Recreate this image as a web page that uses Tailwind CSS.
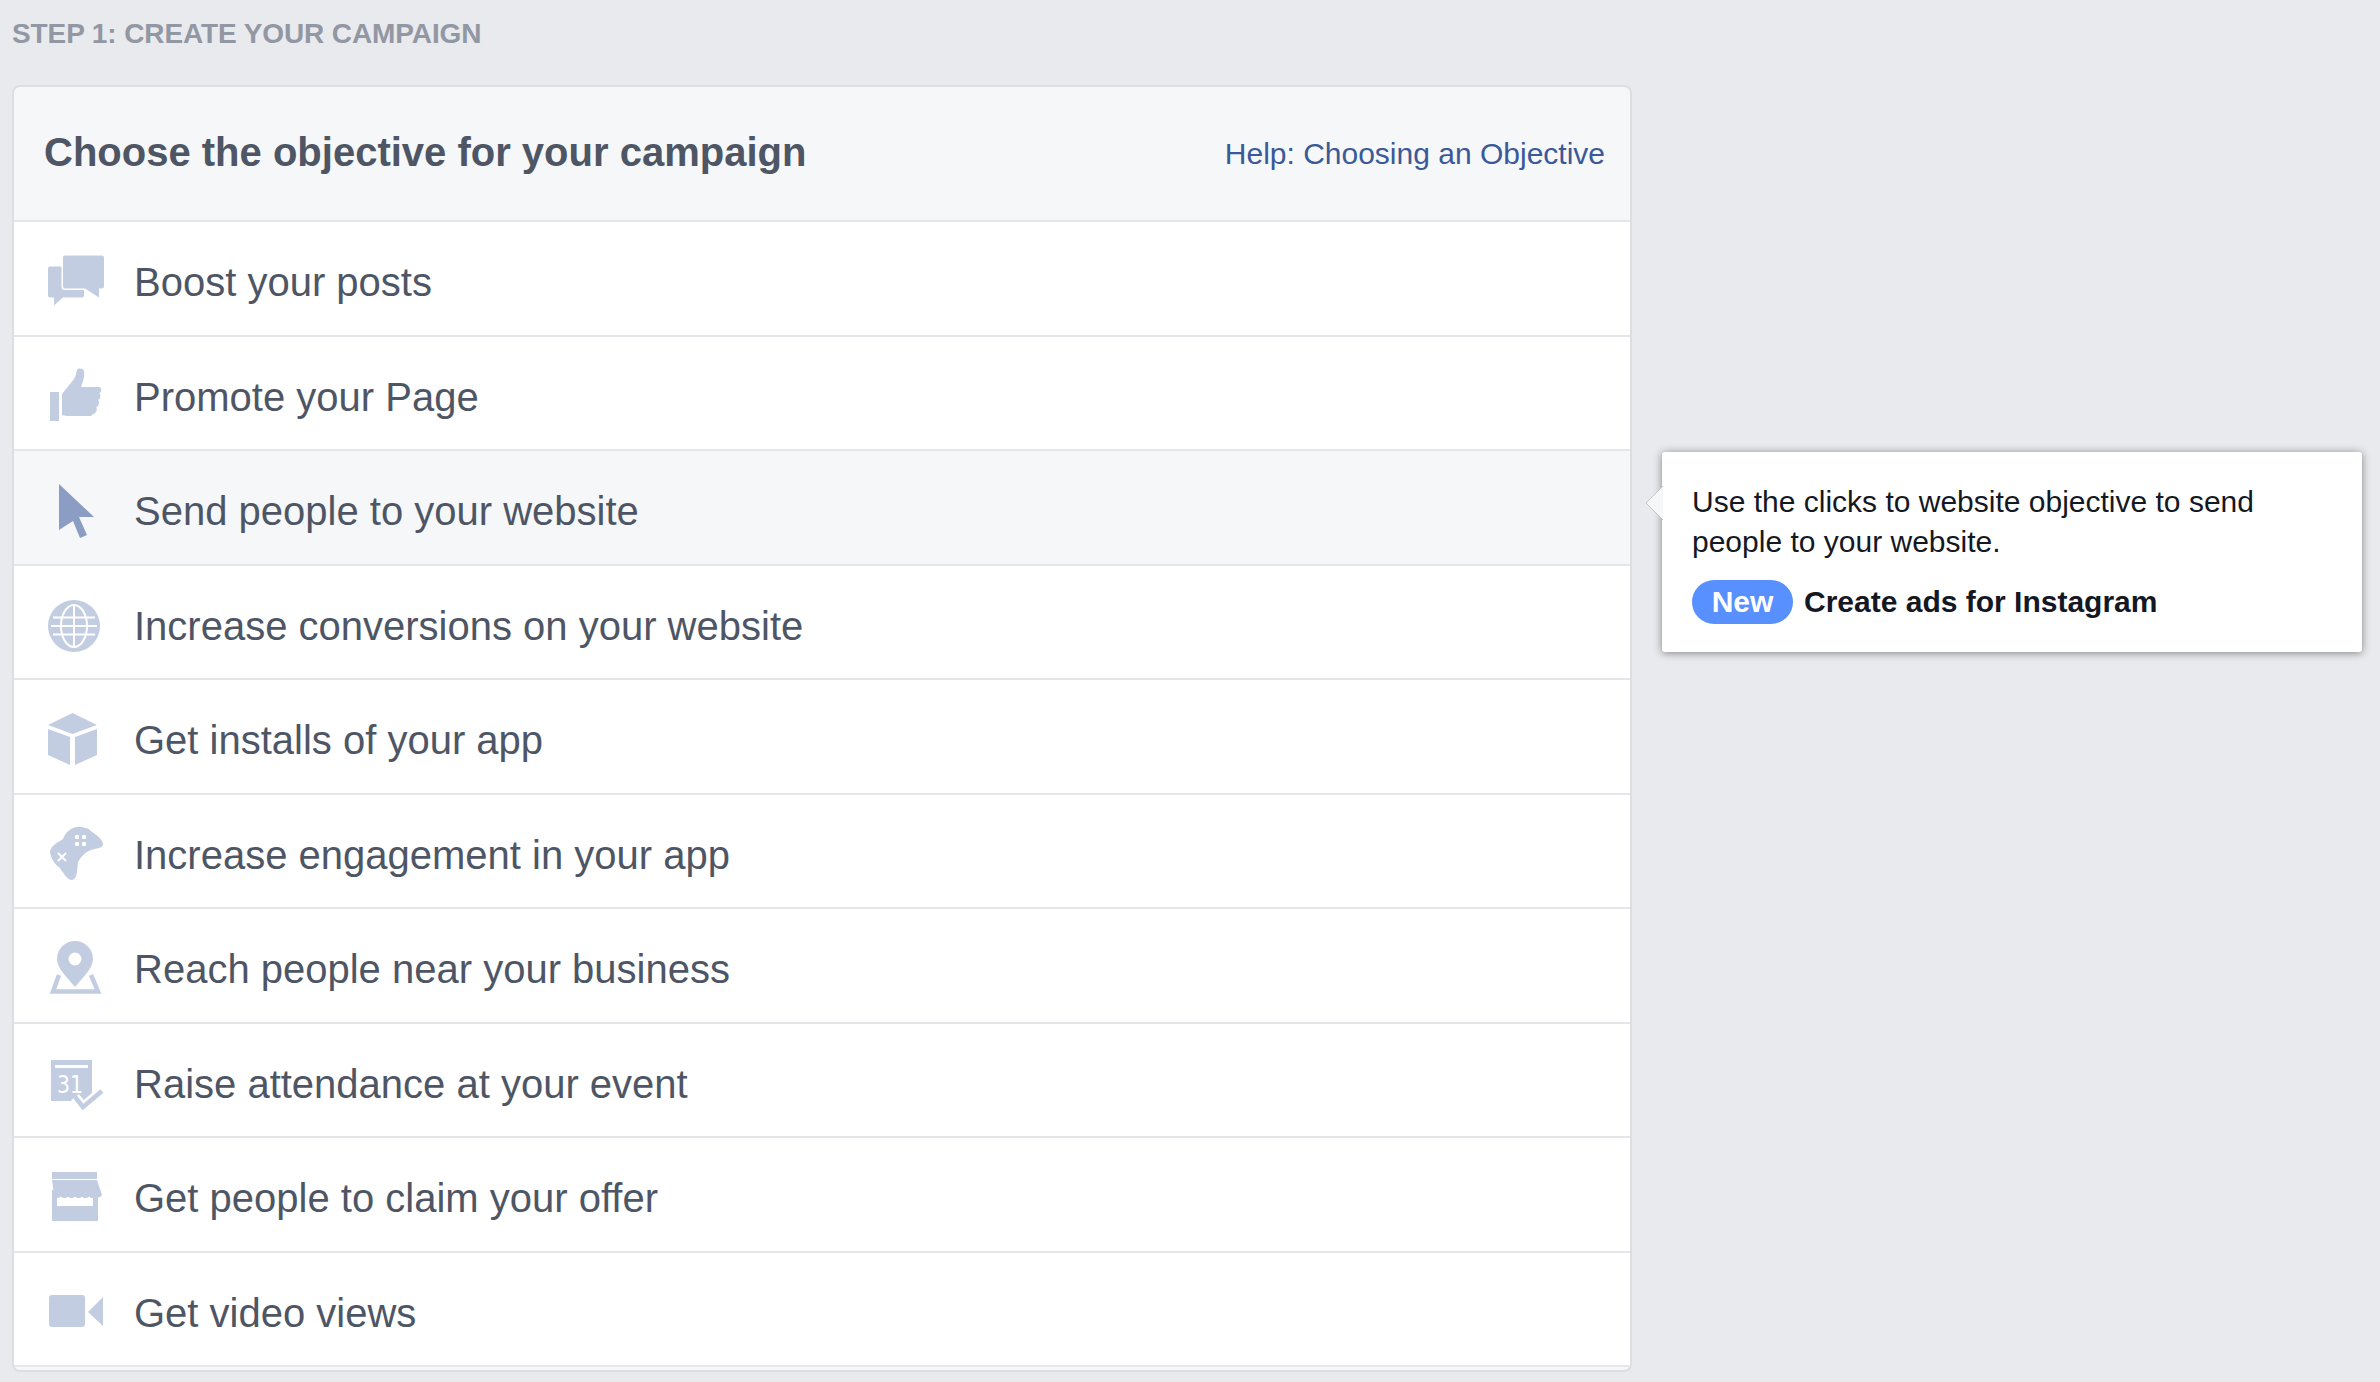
<!DOCTYPE html>
<html>
<head>
<meta charset="utf-8">
<script src="https://cdn.jsdelivr.net/npm/@tailwindcss/browser@4"></script>
</head>
<body class="bg-[#e9eaed] font-['Liberation_Sans',Arial,sans-serif]">
<div class="relative h-[1382px] w-[2380px] overflow-hidden">
  <div class="h-[85px] pl-[12px] pt-[17px] text-[28px] leading-[34px] font-bold tracking-[-0.11px] text-[#9197a3]">STEP 1: CREATE YOUR CAMPAIGN</div>
  <div class="ml-[12px] w-[1620px] h-[1287px] rounded-[8px] border-2 border-[#dddee1] bg-[#f6f7f8] overflow-hidden">
    <div class="flex h-[135px] items-center justify-between border-b-2 border-[#e5e6e9] pl-[30px] pr-[25px]">
      <div class="mb-[3px] text-[40px] font-bold text-[#4e5665]">Choose the objective for your campaign</div>
      <a class="text-[30px] text-[#3b5998]">Help: Choosing an Objective</a>
    </div>
    <div class="flex h-[114.5px] items-center gap-[26px] border-b-2 border-[#e5e6e9] bg-white pl-[30px] text-[40px] text-[#4e5665]">
      <svg class="h-[64px] w-[64px] shrink-0" viewBox="0 0 64 64" fill="#c3cde2"><path d="M6 20.5h32a2 2 0 0 1 2 2v27a2 2 0 0 1-2 2H19l-9 8v-8H6a2 2 0 0 1-2-2v-27a2 2 0 0 1 2-2z"/><path d="M21 9.5h37a2 2 0 0 1 2 2v29a2 2 0 0 1-2 2h-3v9l-14-9H21a2 2 0 0 1-2-2v-29a2 2 0 0 1 2-2z" stroke="#fff" stroke-width="3" paint-order="stroke"/></svg>
      <span class="mt-[8px]">Boost your posts</span>
    </div>
    <div class="flex h-[114.5px] items-center gap-[26px] border-b-2 border-[#e5e6e9] bg-white pl-[30px] text-[40px] text-[#4e5665]">
      <svg class="h-[64px] w-[64px] shrink-0" viewBox="0 0 64 64" fill="#c3cde2"><rect x="6" y="31" width="9" height="29"/><path d="M18 58V33L30 18c2-3 2-6 3-9 1-2 6-2 7 1 1 5-1 11-3 16h18c3 0 3 6 0 6 2 1 2 6-1 7 2 1 1 7-2 7 2 2 0 7-3 7l-2 2H24c-3 0-6-1-6-1z"/></svg>
      <span class="mt-[8px]">Promote your Page</span>
    </div>
    <div class="flex h-[114.5px] items-center gap-[26px] border-b-2 border-[#e5e6e9] bg-[#f6f7f8] pl-[30px] text-[40px] text-[#4e5665]">
      <svg class="h-[64px] w-[64px] shrink-0" viewBox="0 0 64 64" fill="#8b9dc3"><path d="M15 9v46l14-9 7 17 7-3-8-18h15z"/></svg>
      <span class="mt-[8px]">Send people to your website</span>
    </div>
    <div class="flex h-[114.5px] items-center gap-[26px] border-b-2 border-[#e5e6e9] bg-white pl-[30px] text-[40px] text-[#4e5665]">
      <svg class="h-[64px] w-[64px] shrink-0" viewBox="0 0 64 64"><circle cx="30" cy="36" r="26" fill="#c3cde2"/><g fill="none" stroke="#fff" stroke-width="2"><path d="M9 27.5h42M7 36h46M9 44.5h42M30 14v44"/><ellipse cx="30" cy="36" rx="13" ry="21"/></g></svg>
      <span class="mt-[8px]">Increase conversions on your website</span>
    </div>
    <div class="flex h-[114.5px] items-center gap-[26px] border-b-2 border-[#e5e6e9] bg-white pl-[30px] text-[40px] text-[#4e5665]">
      <svg class="h-[64px] w-[64px] shrink-0" viewBox="0 0 64 64" fill="#c3cde2"><path d="M28.5 9L53 21 28.5 30 4 21zM4 25l22 8v28L4 51zM31 33l22-8v26l-22 10z"/></svg>
      <span class="mt-[8px]">Get installs of your app</span>
    </div>
    <div class="flex h-[114.5px] items-center gap-[26px] border-b-2 border-[#e5e6e9] bg-white pl-[30px] text-[40px] text-[#4e5665]">
      <svg class="h-[64px] w-[64px] shrink-0" viewBox="0 0 64 64" fill="#c3cde2"><path d="M6 32c1-5 8-9 13-12 2-6 8-12 15-12 6 0 10 1 13 4 5 4 12 8 12 13 0 4-5 4-12 6-6 2-10 7-13 12-1 6 0 17-6 18-5 0-9-8-13-13-4-2-9-10-9-16z"/><g fill="#fff"><rect x="31" y="16" width="4" height="4" rx="1"/><rect x="38" y="16" width="4" height="4" rx="1"/><rect x="31" y="23" width="4" height="4" rx="1"/><rect x="38" y="23" width="4" height="4" rx="1"/></g><path d="M14 34l8 8M22 34l-8 8" stroke="#fff" stroke-width="2"/></svg>
      <span class="mt-[8px]">Increase engagement in your app</span>
    </div>
    <div class="flex h-[114.5px] items-center gap-[26px] border-b-2 border-[#e5e6e9] bg-white pl-[30px] text-[40px] text-[#4e5665]">
      <svg class="h-[64px] w-[64px] shrink-0" viewBox="0 0 64 64" fill="#c3cde2"><path d="M15 42L9 58.5h45L47 42" fill="none" stroke="#c3cde2" stroke-width="4.5"/><path fill-rule="evenodd" d="M31 54C25 46 13 36 13 26a18 18 0 0 1 36 0C49 36 37 46 31 54zM31 19.500a6.500 6.500 0 1 0 0 13 6.500 6.500 0 0 0 0-13z" stroke="#fff" stroke-width="2" paint-order="stroke"/></svg>
      <span class="mt-[8px]">Reach people near your business</span>
    </div>
    <div class="flex h-[114.5px] items-center gap-[26px] border-b-2 border-[#e5e6e9] bg-white pl-[30px] text-[40px] text-[#4e5665]">
      <svg class="h-[64px] w-[64px] shrink-0" viewBox="0 0 64 64" fill="#c3cde2"><rect x="7" y="12" width="41" height="41"/><rect x="11" y="17" width="33" height="3" fill="#fff"/><text x="13" y="45" font-family="DejaVu Sans" font-size="24" fill="#fff" textLength="26" lengthAdjust="spacingAndGlyphs">31</text><path d="M31 49l8 10 19-16" fill="none" stroke="#fff" stroke-width="10"/><path d="M31 49l8 10 19-16" fill="none" stroke="#c3cde2" stroke-width="4.500"/></svg>
      <span class="mt-[8px]">Raise attendance at your event</span>
    </div>
    <div class="flex h-[114.5px] items-center gap-[26px] border-b-2 border-[#e5e6e9] bg-white pl-[30px] text-[40px] text-[#4e5665]">
      <svg class="h-[64px] w-[64px] shrink-0" viewBox="0 0 64 64" fill="#c3cde2"><rect x="8" y="10" width="45" height="7"/><path fill-rule="evenodd" d="M8 28h46v31H8zM13 28v16h36V28z"/><path d="M8 18h45l5 15c-2 3-4 3-6 1.500-2 2-5 2-7 0-2 2-5 2-7 0-2 2-5 2-7 0-2 2-5 2-7 0-2 2-5 2-7 0-2 2-5 2-7-1.500z"/></svg>
      <span class="mt-[8px]">Get people to claim your offer</span>
    </div>
    <div class="flex h-[114.5px] items-center gap-[26px] border-b-2 border-[#e5e6e9] bg-white pl-[30px] text-[40px] text-[#4e5665]">
      <svg class="h-[64px] w-[64px] shrink-0" viewBox="0 0 64 64" fill="#c3cde2"><rect x="5" y="18" width="36" height="32" rx="3"/><path d="M59 20L44 35l15 14z"/></svg>
      <span class="mt-[8px]">Get video views</span>
    </div>
  </div>
  <div class="absolute left-[1662px] top-[452px] h-[200px] w-[700px] rounded-[3px] bg-white pl-[30px] pt-[30px] text-[#141823] shadow-[0_1px_8px_rgba(0,0,0,0.45)]">
    <svg class="absolute left-[-16px] top-[34px] h-[34px] w-[17px]" viewBox="0 0 17 34"><path d="M17 0L0 17l17 17z" fill="#f6f7f8"/><path d="M17 0L0 17l17 17" fill="none" stroke="#c4c5c8"/></svg>
    <p class="text-[30px] leading-[40px]">Use the clicks to website objective to send<br>people to your website.</p>
    <div class="mt-[17px] flex items-center gap-[11px]">
      <span class="flex h-[44px] w-[101px] items-center justify-center rounded-full bg-[#5890ff] text-[30px] font-bold text-white">New</span>
      <span class="text-[30px] font-bold">Create ads for Instagram</span>
    </div>
  </div>
</div>
</body>
</html>
